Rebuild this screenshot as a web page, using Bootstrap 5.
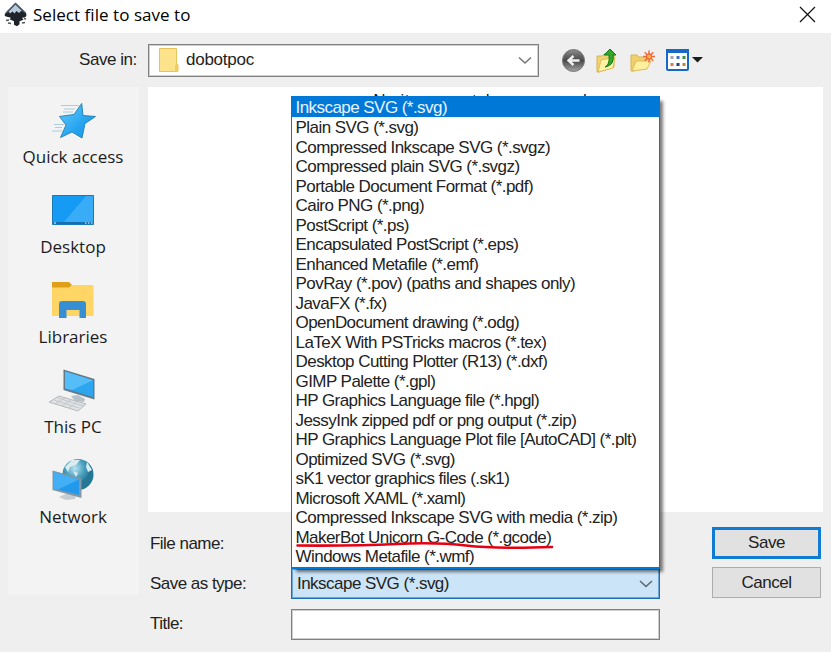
<!DOCTYPE html>
<html lang="en">
<head>
<meta charset="utf-8">
<title>Select file to save to</title>
<link href="https://cdn.jsdelivr.net/npm/bootstrap@5.3.0/dist/css/bootstrap.min.css" rel="stylesheet">
<style>
  body { font: 17px/20px "Liberation Sans", Arial, sans-serif; letter-spacing: -.53px; color: #222; background: #fff; }
  svg { display: block; flex: none; overflow: visible; }
  .dialog { width: 831px; height: 652px; background: #efefef; }
  .titlebar { height: 33px; padding: 0 15px 4px 4px; background: #fff; color: #000; font-family: "Open Sans", "Noto Sans", sans-serif; letter-spacing: .04px; }
  .titlebar span { padding-left: 5px; }
  .toolbar { height: 54px; padding-left: 79px; }
  .toolbar-label { width: 69px; letter-spacing: -.45px; }
  .folder-box, .field { border: 1px solid #808080; box-shadow: inset 0 0 0 1px #cfcfcf; background: #fff; }
  .folder-box { width: 391px; height: 33px; padding: 0 5px 0 10px; letter-spacing: -.25px; margin-right: 22px; }
  .folder-box span { padding-left: 7px; }
  .places { width: 131px; height: 508px; margin-left: 8px; background: #f3f3f3; font-family: "Open Sans", "Noto Sans", sans-serif; }
  .place { height: 90px; padding: 10px 1px 0 0; color: #1c1c1c; letter-spacing: 0; }
  .place svg { margin: 0 6px 2px 0; }
  .main-pane { width: 675px; margin-left: 9px; }
  .file-list { height: 425px; background: #fff; padding-top: 4px; letter-spacing: .3px; }
  .field-labels { width: 143px; padding: 6px 0 0 2px; gap: 20px; }
  .fields { width: 369px; gap: 10px; margin-top: -1px; }
  .field { height: 31px; }
  .type-box { border-color: #1a6fb0; box-shadow: inset 0 0 0 1px #6aa7d8; background: #cce4f7; padding: 0 5px; }
  .type-menu { left: 0; bottom: 30px; width: 369px; height: 473px; z-index: 2; background: #fff; border: 1px solid #0078d7; border-bottom-width: 2px; box-shadow: 4px 4px 3px -1px rgba(0,0,0,.5); }
  .type-menu li { height: 19.52px; line-height: 21px; padding-left: 3.5px; white-space: nowrap; letter-spacing: -.55px; }
  .type-menu li.chosen { height: 20px; background: #0078d7; color: #e8f4ff; }
  .red-mark { left: 4px; top: 15px; z-index: 1; }
  .actions { width: 109px; margin-left: 52px; gap: 8px; margin-top: -1px; }
  .push { height: 31px; border: 1px solid #adadad; background: #e1e1e1; padding: 0; border-radius: 0; font-size: 17px; line-height: 20px; color: #222; letter-spacing: -.45px; }
  .push-main { border: 3px solid #0f7bd3; height: 32px; }
</style>
</head>
<body>
<div class="dialog overflow-hidden">
  <header class="titlebar d-flex align-items-center">
    <svg width="24" height="27" viewBox="0 0 24 27"><path d="M11.500 2 1.500 12q-2 2.500.5 3.500l5 1.200-1.500 1.500 4.500 2 0 3.500 3 1.500 2.500-2 0-3 4-1.500-1.500-2q6 0 4-4.700z" fill="#20232a"/><path d="m11.500 3.500-7 7 1.500 2 2.500-2 2 2 2-2.500 2.500 2 2-2 1.500.5z" fill="#b9cadb"/><path d="m2 12 9.500-9.500L21.500 12" fill="none" stroke="#4d5b6b" stroke-width="1.300"/><path d="m2 19.500 3-.5M20 17.500l2 .5M4 22l3 .5M18 22l3-.5" stroke="#555" stroke-width="1.600"/></svg>
    <span>Select file to save to</span>
    <svg class="ms-auto" width="17" height="17" viewBox="0 0 17 17"><path d="m1 1 15 15M16 1 1 16" stroke="#111" stroke-width="1.200"/></svg>
  </header>

  <div class="toolbar d-flex align-items-center">
    <span class="toolbar-label">Save in:</span>
    <div class="folder-box d-flex align-items-center">
      <svg width="20" height="25" viewBox="0 0 20 25"><path d="M.5.500h17v15l1.500 1v7H.5z" fill="#fce28a" stroke="#e8c55c"/><path d="m16 24v-6l1.500-3 1.500 1v8z" fill="#f0cb5f"/></svg>
      <span>dobotpoc</span>
      <svg class="ms-auto" width="16" height="12" viewBox="0 0 16 12"><path d="m2 3.500 6 5.500 6-5.500" fill="none" stroke="#777" stroke-width="1.600"/></svg>
    </div>
    <svg width="25" height="25" viewBox="0 0 25 25"><defs><linearGradient id="gb" x2="0" y2="1"><stop stop-color="#8d8d8d"/><stop offset=".5" stop-color="#484848"/><stop offset="1" stop-color="#a5a5a5"/></linearGradient></defs><circle cx="12.500" cy="12.500" r="11" fill="url(#gb)" stroke="#777"/><path d="M18.500 12.500H7.500m5-4.500L7.500 12.500l5 4.500" fill="none" stroke="#f0f0f0" stroke-width="2.400"/></svg>
    <svg class="ms-2" width="26" height="27" viewBox="0 0 26 27"><path d="M3 9h5l2-2h10v13L5 25H3z" fill="#f0d375" stroke="#d9b54c"/><path d="m4 25 3-12 14-3-2 11z" fill="#fff0a8" stroke="#dfbd58"/><path d="M11 20q5-2 4-12h-5l6-6 6 6h-3q2 10-8 12z" fill="#35a52c" stroke="#147a17"/></svg>
    <svg class="ms-2" width="29" height="25" viewBox="0 0 29 25"><path d="M3 7h6l1.500 2H19v5L6 23H3z" fill="#efd06d" stroke="#d9b54c"/><path d="m4 23 4-10h15l-4 8z" fill="#fff0a0" stroke="#dfbd58"/><path d="M21 2.500v12M15 8.500h12M16.700 4.200l8.600 8.600M25.300 4.200l-8.600 8.600" stroke="#f4693a" stroke-width="1.500"/><circle cx="21" cy="8.500" r="2.600" fill="#ffb84f" stroke="#ef5028"/></svg>
    <svg class="ms-2" width="39" height="24" viewBox="0 0 39 24"><rect x="2" y="2" width="21" height="20" rx="1" fill="#fff" stroke="#1769c9" stroke-width="2"/><path d="M1 1h23v4H1z" fill="#1769c9"/><path d="M5.500 8h3v3h-3z" fill="#a7a0b0"/><path d="M11.500 8h3v3h-3z" fill="#3d70d0"/><path d="M17.500 8h3v3h-3z" fill="#36923c"/><path d="M5.500 15h3v3h-3z" fill="#e5764b"/><path d="M11.500 15h3v3h-3z" fill="#27407f"/><path d="M17.500 15h3v3h-3z" fill="#b78a2a"/><path d="M27 9h11L32.500 14.500z" fill="#1d1d1d"/></svg>
  </div>

  <div class="d-flex align-items-start">
    <nav class="places d-flex flex-column">
      <div class="place d-flex flex-column align-items-center">
        <svg width="48" height="48" viewBox="0 0 48 48"><defs><linearGradient id="st" x2="1" y2="1"><stop stop-color="#6accfb"/><stop offset=".6" stop-color="#25a4f0"/><stop offset="1" stop-color="#188fe4"/></linearGradient></defs><path d="M15 8.500h18M18 12h11M17 15h10M8 27.500h10M9 30.500h7M6 34h10" stroke="#a9cce0"/><path d="M35.700 6.500 37 18.500 49.500 19.500 39 26.500 36 41 26 35 14.500 40.500 20 28 13.500 19.500 28 17.500z" fill="url(#st)" stroke="#2787b8" stroke-linejoin="round"/></svg>
        <span>Quick access</span>
      </div>
      <div class="place d-flex flex-column align-items-center">
        <svg width="48" height="48" viewBox="0 0 48 48"><path d="M6.500 8.500h41v29h-41z" fill="#159bf3" stroke="#197ab9"/><path d="M18 35 40 9h7v26z" fill="#39acf8"/><path d="M7 35h40v2H7z" fill="#156fae"/><path d="M8 36h2M39 36h1.500M42 36h1.500M45 36h1.500" stroke="#fff"/></svg>
        <span>Desktop</span>
      </div>
      <div class="place d-flex flex-column align-items-center">
        <svg width="48" height="48" viewBox="0 0 48 48"><path d="M6 5h17l3 3-3 4H6z" fill="#dfa017"/><path d="M6 10.500h17l3-2.500h21.500v31H6z" fill="#ffd666"/><path d="M13 41V27q0-3 3-3h21q3 0 3 3v14h-6.500v-8h-13v8z" fill="#368fd2"/></svg>
        <span>Libraries</span>
      </div>
      <div class="place d-flex flex-column align-items-center">
        <svg width="48" height="48" viewBox="0 0 48 48"><path d="m25 29 7-1 7 4-1 3-9-1z" fill="#b7c1c9"/><path d="m17.500 2.500 31 9.500v20.500l-31-9.500z" fill="#637988"/><path d="m19 4.500 28 8.800V30L19 21.500z" fill="#2da5ef"/><path d="m19 4.500 28 8.800L26 23l-7-1.500z" fill="#55bdf7"/><path d="m3 35 10-6 27 8-8 7z" fill="#e0e2e4" stroke="#b5b9bd"/><path d="m8 33 25 8M12 31l25 8M9 37l10-6M16 39l9-6M23 41l8-6" stroke="#c4c7ca" fill="none"/></svg>
        <span>This PC</span>
      </div>
      <div class="place d-flex flex-column align-items-center">
        <svg width="48" height="48" viewBox="0 0 48 48"><defs><radialGradient id="gl" cx=".4" cy=".3"><stop stop-color="#bce3ef"/><stop offset=".6" stop-color="#4aa1bf"/><stop offset="1" stop-color="#257895"/></radialGradient></defs><circle cx="32" cy="17.500" r="15.500" fill="url(#gl)"/><path d="m19 10 7-7 8 0-4 5-6 2-2 5zM41 5l5 8-4 2-2-5zM27 14l5 2-2 4z" fill="#d9edf0"/><path d="m13 40 7-3 10 1-1 4-9 1z" fill="#c7cdd1"/><path d="m6.500 13.500 29 8V41l-29-8z" fill="#8497a3"/><path d="m7.500 15 25.500 7.500V38L7.500 31.500z" fill="#2399eb"/><path d="m7.500 15 25.500 7.500L12 32.500l-4.500-1z" fill="#43b0f6"/></svg>
        <span>Network</span>
      </div>
    </nav>

    <main class="main-pane">
      <div class="file-list text-center">No items match your search.</div>
      <div class="d-flex pt-3">
        <div class="field-labels d-flex flex-column">
          <div>File name:</div>
          <div>Save as type:</div>
          <div>Title:</div>
        </div>
        <div class="fields d-flex flex-column">
          <div class="field"></div>
          <div class="position-relative">
            <div class="field type-box d-flex align-items-center">
              <span>Inkscape SVG (*.svg)</span>
              <svg class="ms-auto" width="16" height="12" viewBox="0 0 16 12"><path d="m2 3 6 5.500L14 3" fill="none" stroke="#5d6770" stroke-width="1.600"/></svg>
            </div>
            <ul class="type-menu list-unstyled position-absolute mb-0">
              <li class="chosen">Inkscape SVG (*.svg)</li>
              <li>Plain SVG (*.svg)</li>
              <li>Compressed Inkscape SVG (*.svgz)</li>
              <li>Compressed plain SVG (*.svgz)</li>
              <li>Portable Document Format (*.pdf)</li>
              <li>Cairo PNG (*.png)</li>
              <li>PostScript (*.ps)</li>
              <li>Encapsulated PostScript (*.eps)</li>
              <li>Enhanced Metafile (*.emf)</li>
              <li>PovRay (*.pov) (paths and shapes only)</li>
              <li>JavaFX (*.fx)</li>
              <li>OpenDocument drawing (*.odg)</li>
              <li>LaTeX With PSTricks macros (*.tex)</li>
              <li>Desktop Cutting Plotter (R13) (*.dxf)</li>
              <li>GIMP Palette (*.gpl)</li>
              <li>HP Graphics Language file (*.hpgl)</li>
              <li>JessyInk zipped pdf or png output (*.zip)</li>
              <li>HP Graphics Language Plot file [AutoCAD] (*.plt)</li>
              <li>Optimized SVG (*.svg)</li>
              <li>sK1 vector graphics files (.sk1)</li>
              <li>Microsoft XAML (*.xaml)</li>
              <li>Compressed Inkscape SVG with media (*.zip)</li>
              <li class="position-relative">MakerBot Unicorn G-Code (*.gcode)
                <svg class="red-mark position-absolute" width="260" height="8" viewBox="0 0 260 8"><path d="M1.500 3.500Q60 4 100 2t70 1.500q30 3.500 86 1.500" fill="none" stroke="#e60012" stroke-width="2.600" stroke-linecap="round"/></svg>
              </li>
              <li>Windows Metafile (*.wmf)</li>
            </ul>
          </div>
          <div class="field"></div>
        </div>
        <div class="actions d-flex flex-column">
          <button class="btn push push-main">Save</button>
          <button class="btn push">Cancel</button>
        </div>
      </div>
    </main>
  </div>
</div>
<script src="https://cdn.jsdelivr.net/npm/bootstrap@5.3.0/dist/js/bootstrap.bundle.min.js"></script>
</body>
</html>
